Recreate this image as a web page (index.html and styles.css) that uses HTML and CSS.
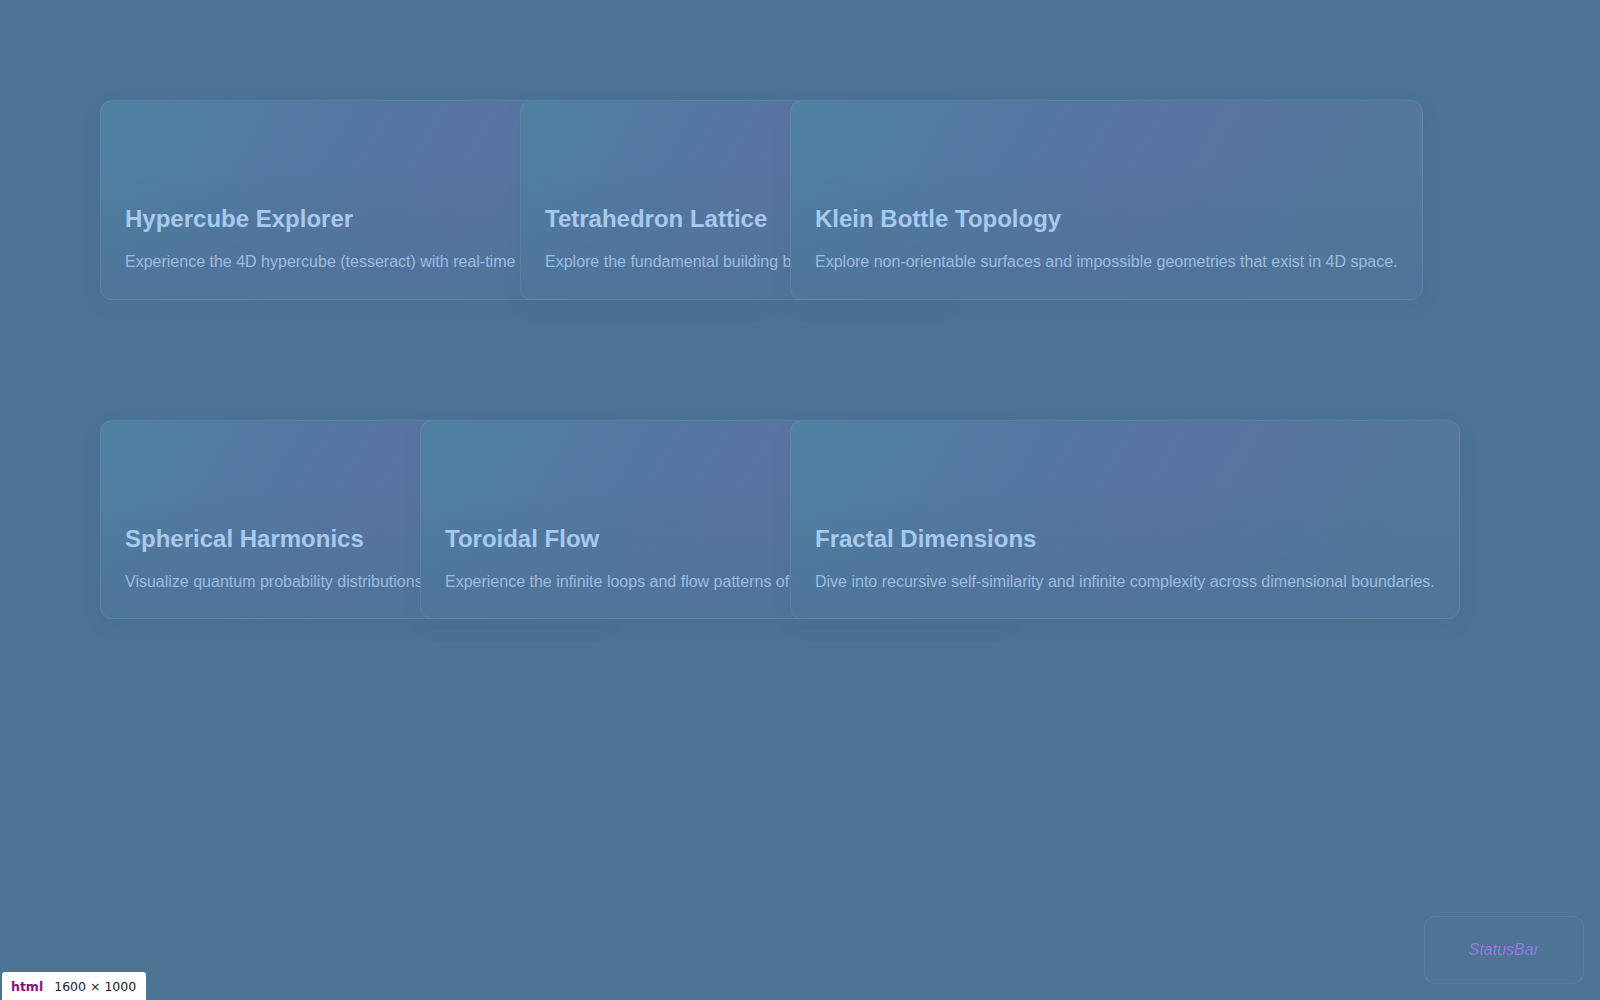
FILE: index.html
```html
<!DOCTYPE html>
<html lang="en">
<head>
<meta charset="utf-8">
<title>Dimensions</title>
<link rel="stylesheet" href="styles.css">
</head>
<body>
<main class="page">
  <section class="row row-a">
    <article class="card">
      <div class="card-visual"></div>
      <h3 class="card-title">Hypercube Explorer</h3>
      <p class="card-desc">Experience the 4D hypercube (tesseract) with real-time</p>
    </article>
    <article class="card">
      <div class="card-visual"></div>
      <h3 class="card-title">Tetrahedron Lattice</h3>
      <p class="card-desc">Explore the fundamental building b</p>
    </article>
    <article class="card">
      <div class="card-visual"></div>
      <h3 class="card-title">Klein Bottle Topology</h3>
      <p class="card-desc">Explore non-orientable surfaces and impossible geometries that exist in 4D space.</p>
    </article>
  </section>
  <section class="row row-b">
    <article class="card">
      <div class="card-visual"></div>
      <h3 class="card-title">Spherical Harmonics</h3>
      <p class="card-desc">Visualize quantum probability distributions</p>
    </article>
    <article class="card">
      <div class="card-visual"></div>
      <h3 class="card-title">Toroidal Flow</h3>
      <p class="card-desc">Experience the infinite loops and flow patterns of</p>
    </article>
    <article class="card">
      <div class="card-visual"></div>
      <h3 class="card-title">Fractal Dimensions</h3>
      <p class="card-desc">Dive into recursive self-similarity and infinite complexity across dimensional boundaries.</p>
    </article>
  </section>
</main>
<div class="status-bar">StatusBar</div>
<div class="inspect-tag"><span class="inspect-name">html</span><span class="inspect-dims">1600 × 1000</span></div>
</body>
</html>
```

FILE: styles.css
```css
html, body {
  margin: 0;
  padding: 0;
}

body {
  background: #4b7393;
  min-height: 100vh;
  overflow: hidden;
  font-family: "Liberation Sans", Arial, sans-serif;
}

.page {
  padding: 100px 100px;
  display: flex;
  flex-direction: column;
  gap: 120px;
}

.row {
  display: grid;
  align-items: start;
}

.row-a {
  grid-template-columns: 420px 270px max-content;
}

.row-b {
  grid-template-columns: 320px 370px max-content;
}

.card {
  position: relative;
  justify-self: start;
  min-width: 160%;
  box-sizing: border-box;
  white-space: nowrap;
  padding: 24px;
  border: 1px solid rgba(140, 175, 210, 0.2);
  border-radius: 12px;
  background:
    linear-gradient(180deg, rgba(75, 115, 150, 0) 35%, rgba(76, 114, 150, 0.75) 100%),
    linear-gradient(120deg, #4e80a2 0%, #5477a1 35%, #5a74a1 55%, #54789b 80%, #52799a 100%);
  box-shadow: 0 6px 24px rgba(40, 70, 100, 0.05);
}

.row .card:last-child {
  min-width: 0;
}

.card-visual {
  height: 80px;
}

.card-title {
  margin: 0 0 16px;
  font-size: 24px;
  font-weight: 700;
  line-height: normal;
  color: #a8c9ee;
}

.card-desc {
  margin: 0;
  font-size: 16px;
  line-height: 1.6;
  color: #9dbbe0;
}

.status-bar {
  position: fixed;
  right: 16px;
  bottom: 16px;
  padding: 23px 44px 24px;
  border: 1px solid rgba(140, 175, 210, 0.2);
  border-radius: 12px;
  background: rgba(80, 118, 152, 0.35);
  font-family: "Liberation Sans", Arial, sans-serif;
  font-style: italic;
  font-size: 16px;
  line-height: 19px;
  color: #a273e6;
}

.inspect-tag {
  position: fixed;
  left: 2px;
  bottom: 0;
  height: 28px;
  padding: 0 10px 0 9px;
  display: flex;
  align-items: center;
  gap: 11px;
  background: #ffffff;
  border-radius: 3px 3px 0 0;
  font-family: "DejaVu Sans", sans-serif;
  font-size: 12.5px;
}

.inspect-name {
  font-weight: 700;
  color: #881280;
}

.inspect-dims {
  color: #222222;
}
```
